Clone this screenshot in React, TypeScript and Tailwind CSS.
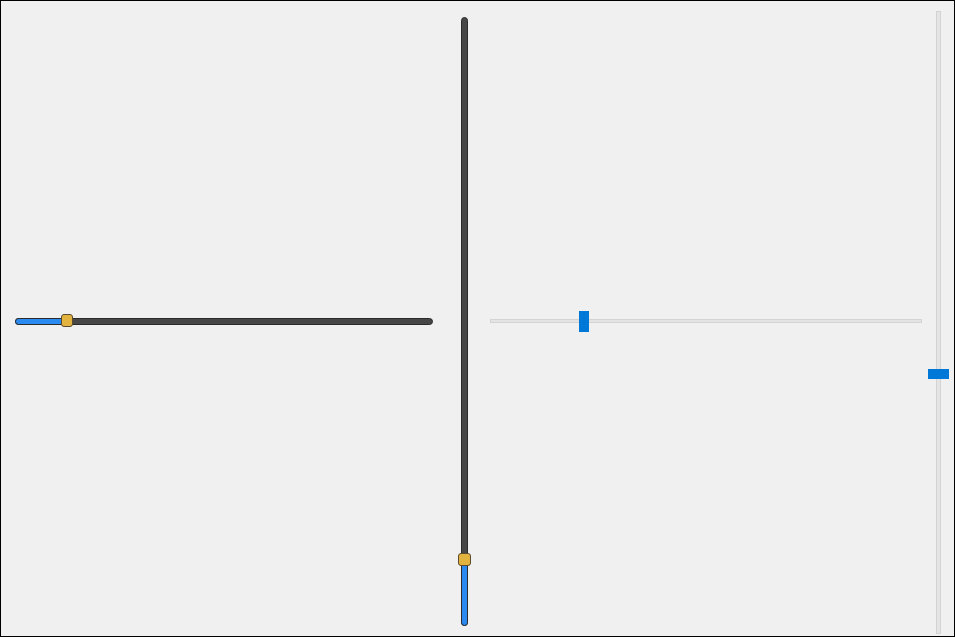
import React from "react";

export default function App() {
  return (
    <div className="w-[955px] h-[637px] border border-black bg-[#f0f0f0] flex flex-row items-start overflow-hidden">
      {/* Slider A: dark horizontal */}
      <div className="ml-[14px] mt-[313px] w-[418px] h-[14px] relative flex items-center">
        <div className="w-full h-[7px] rounded-full bg-[#474747] border border-[#2b2b2b]" />
        <div className="absolute left-0 top-[3.5px] w-[50px] h-[7px] rounded-full bg-[#2b8af0] border border-[#2b2b2b]" />
        <div className="absolute left-[46px] top-0 w-[12px] h-[13px] rounded-[3px] bg-[#e2b43f] border border-[#5b4a2c]" />
      </div>

      {/* Slider B: dark vertical */}
      <div className="ml-[25px] mt-[16px] w-[13px] h-[609px] relative flex justify-center">
        <div className="w-[7px] h-full rounded-full bg-[#474747] border border-[#2b2b2b]" />
        <div className="absolute bottom-0 left-[3px] w-[7px] h-[64px] rounded-full bg-[#2b8af0] border border-[#2b2b2b]" />
        <div className="absolute top-[536px] left-0 w-[13px] h-[13px] rounded-[3px] bg-[#e2b43f] border border-[#5b4a2c]" />
      </div>

      {/* Slider C: light horizontal */}
      <div className="ml-[19px] mt-[310px] w-[432px] h-[21px] relative flex items-start">
        <div className="mt-[8px] w-full h-[4px] bg-[#e4e4e4] border border-[#d3d3d3]" />
        <div className="absolute left-[89px] top-0 w-[10px] h-[21px] bg-[#0078d7]" />
      </div>

      {/* Slider D: light vertical */}
      <div className="ml-[6px] mt-[10px] w-[21px] h-[623px] relative flex justify-center">
        <div className="w-[5px] h-full bg-[#e4e4e4] border border-[#d3d3d3]" />
        <div className="absolute left-0 top-[358px] w-[21px] h-[10px] bg-[#0078d7]" />
      </div>
    </div>
  );
}
